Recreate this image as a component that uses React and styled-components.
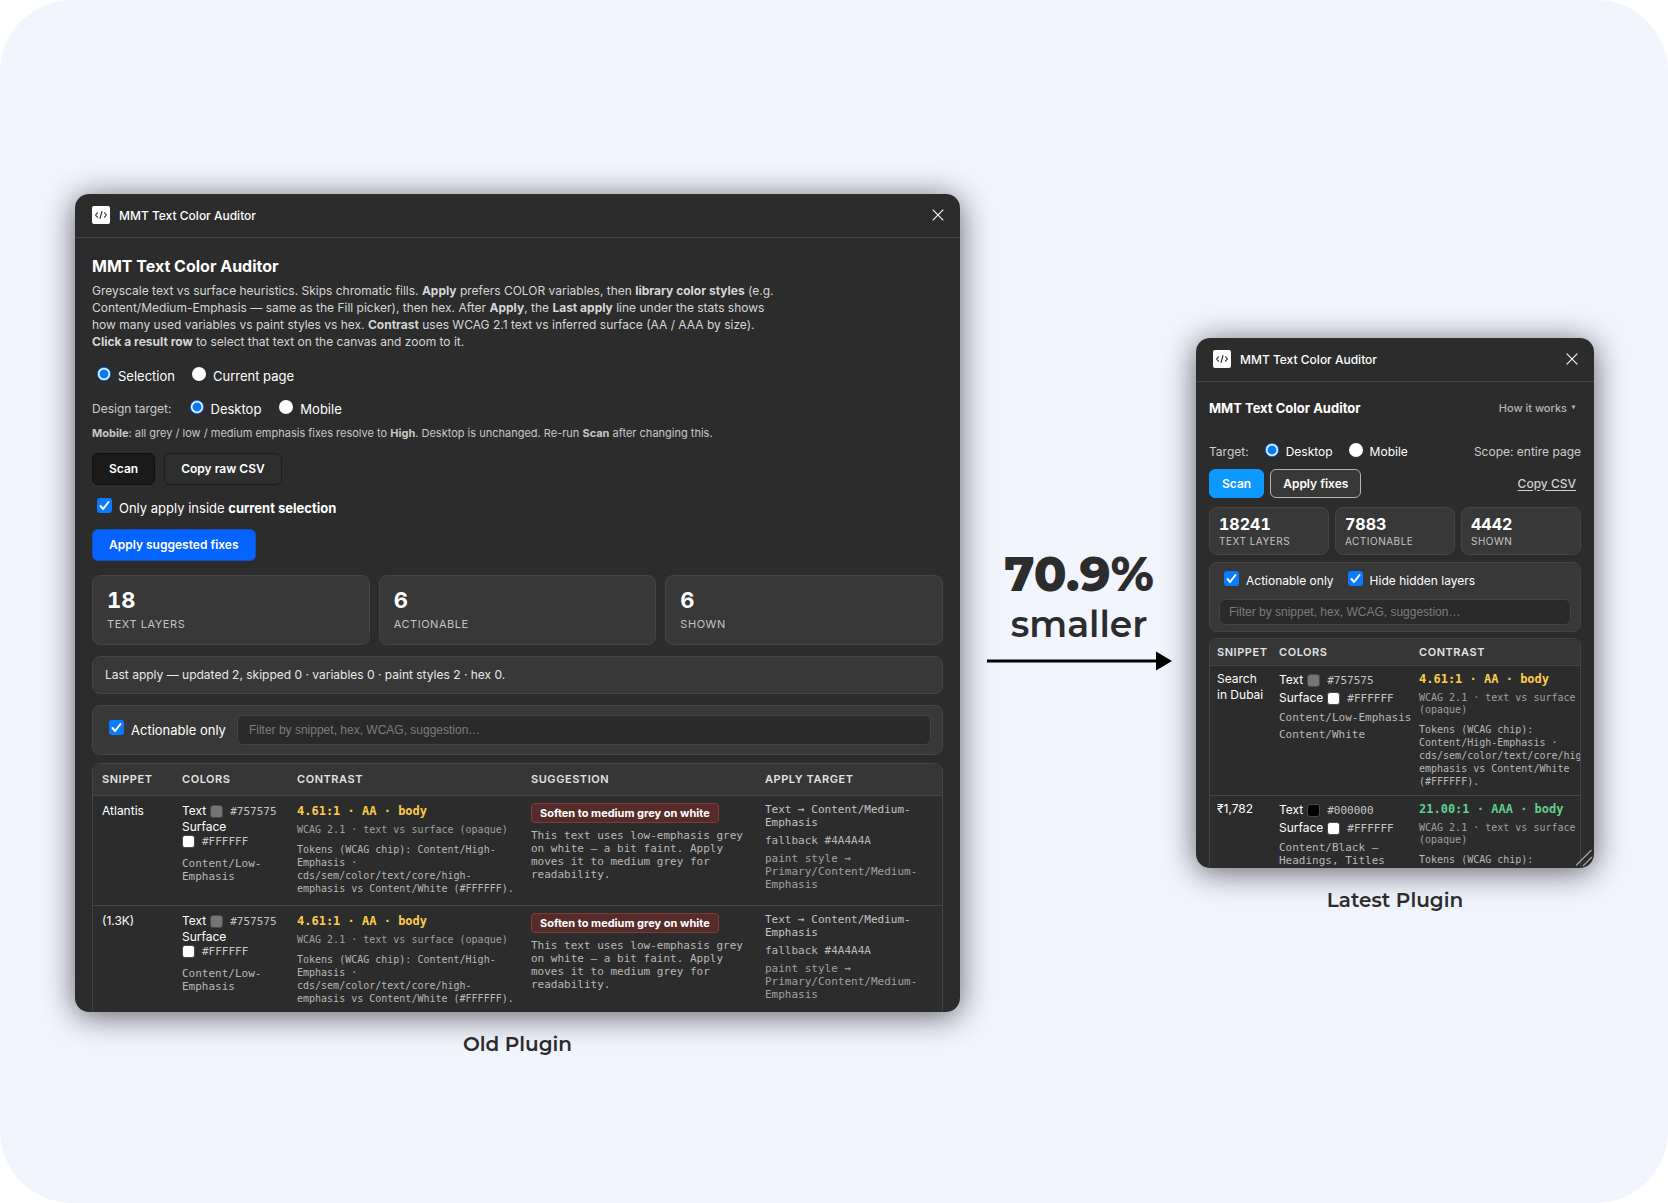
import styled, { createGlobalStyle, css } from "styled-components";
import React, { useState } from "react";

const GlobalStyle = createGlobalStyle`
    * {
        box-sizing: border-box;
    }
    body {
        margin: 0;
        background-color: #ffffff;
        font-family: Inter, "Liberation Sans", sans-serif;
    }
`

//Page
const Stage = styled.main`
    display: grid;
    grid-template-columns: 885fr 236fr 398fr;
    align-items: center;
    min-height: 100vh;
    padding: 0 74px 0 75px;
    border-radius: 72px;
    background-color: #f2f5fe;
`

const Figure = styled.figure`
    margin: 0;
    padding-top: 48px;
    min-width: 0;
`

const Caption = styled.figcaption`
    margin-top: 18px;
    color: #2c2c2c;
    font-family: Montserrat, Inter, sans-serif;
    font-size: 20px;
    font-weight: 600;
    line-height: 28px;
    text-align: center;
`

const Middle = styled.div`
    display: flex;
    flex-direction: column;
    align-items: center;
    padding: 16px 0 0 2px;
    color: #2c2c2c;
    font-family: Montserrat, Inter, sans-serif;
`

const Percent = styled.strong`
    font-size: 48px;
    font-weight: 800;
    line-height: 52px;
`

const Smaller = styled.span`
    margin-bottom: 3px;
    font-size: 36px;
    font-weight: 600;
    line-height: 48px;
`

//Plugin window
const Window = styled.section`
    position: relative;
    max-height: ${props => props.$compact ? "530px" : "818px"};
    overflow: hidden;
    border-radius: 14px;
    background-color: #2c2c2c;
    color: #ffffff;
    font-size: 12px;
`

const Shadow = styled.div`
    border-radius: 14px;
    box-shadow: 0 4px 32px rgba(20, 16, 24, 0.65);
`

const TitleBar = styled.header`
    display: flex;
    align-items: center;
    gap: 9px;
    height: 44px;
    padding: 0 16px 0 17px;
    border-bottom: 1px solid #444444;
    font-weight: 500;
`

const CloseButton = styled.button`
    display: flex;
    margin-left: auto;
    padding: 0;
    border: none;
    background: none;
    color: #ffffff;
`

const Body = styled.div`
    padding: ${props => props.$compact ? "14px 13px 0" : "16px 17px 0"};
`

const Heading = styled.h1`
    margin: 0;
    font-size: ${props => props.$compact ? "13px" : "16px"};
    font-weight: 700;
    line-height: 24px;
`

const Intro = styled.p`
    max-width: 694px;
    margin: 4px 0 0;
    color: #d6d6d6;
    line-height: 17px;
`

const Note = styled.p`
    margin: 5px 0 11px;
    color: #c8c8c8;
    font-size: 11px;
    line-height: 18px;
`

const Row = styled.div`
    display: flex;
    align-items: center;
    gap: ${props => props.$gap || "9px"};
    min-height: ${props => props.$height || "auto"};
    margin-top: ${props => props.$top || "0"};
`

const Hint = styled.span`
    margin-left: ${props => props.$end ? "auto" : "0"};
    color: #cccccc;
`

const Choice = styled.label`
    display: flex;
    align-items: center;
    gap: 7px;
    margin-left: 5px;
    font-size: ${props => props.$compact ? "12px" : "13px"};
    line-height: 20px;
    white-space: nowrap;
`

const Radio = styled.input`
    appearance: none;
    width: 14px;
    height: 14px;
    margin: 0 0 4px;
    border-radius: 50%;
    background-color: #ffffff;
    &:checked {
        border: 1px solid #0a7cff;
        background: radial-gradient(circle, #0a78f5 0 4px, #ffffff 5px);
    }
`

const Check = styled.input`
    appearance: none;
    width: 15px;
    height: 15px;
    margin: 0 0 4px;
    border-radius: 3px;
    background-color: #ffffff;
    &:checked {
        background: #0a7aff url("data:image/svg+xml,%3Csvg xmlns='http://www.w3.org/2000/svg' viewBox='0 0 15 15' fill='none' stroke='white' stroke-width='2' stroke-linecap='round' stroke-linejoin='round'%3E%3Cpath d='M3.5 8l2.6 3L11.5 4'/%3E%3C/svg%3E");
    }
`

const variants = {
    dark: css`
        background-color: #1a1a1a;
        border-color: #101010;
    `,
    plain: css`
        background-color: #2e2e2e;
        border-color: #1e1e1e;
    `,
    blue: css`
        background-color: #0563ff;
        border-color: #0e50c8;
    `,
    sky: css`
        background-color: #0d99ff;
        border-color: #0d99ff;
    `,
    outline: css`
        background-color: #383838;
        border-color: #b4b4b4;
    `,
}

const Button = styled.button`
    height: ${props => props.$compact ? "29px" : "32px"};
    padding: ${props => props.$compact ? "0 12px" : "0 16px"};
    border: 1px solid;
    border-radius: 6px;
    color: #ffffff;
    font-family: inherit;
    font-size: 12px;
    font-weight: 600;
    ${props => variants[props.$variant]}
`

const TextButton = styled.button`
    display: flex;
    align-items: center;
    gap: 4px;
    margin-left: auto;
    padding: 0 5px;
    border: none;
    background: none;
    color: ${props => props.$underline ? "#d0d0d0" : "#b4b4b4"};
    font-family: inherit;
    font-size: ${props => props.$underline ? "12px" : "11px"};
    font-weight: 500;
    text-decoration: ${props => props.$underline ? "underline" : "none"};
    text-underline-offset: 2px;
`

const Panel = styled.div`
    border: 1px solid #444444;
    border-radius: 8px;
    background-color: #383838;
`

const Stats = styled.div`
    display: grid;
    grid-template-columns: repeat(3, 1fr);
    gap: ${props => props.$compact ? "6px" : "9px"};
    margin-top: ${props => props.$compact ? "9px" : "14px"};
`

const StatCard = styled(Panel)`
    padding: ${props => props.$compact ? "6px 9px 5px" : "10px 14px"};
`

const StatNumber = styled.div`
    font-size: ${props => props.$compact ? "16px" : "22px"};
    font-weight: 700;
    font-variant-numeric: tabular-nums;
    line-height: ${props => props.$compact ? "20px" : "28px"};
`

const StatLabel = styled.div`
    color: #c4c4c4;
    font-size: ${props => props.$compact ? "10px" : "11px"};
    line-height: ${props => props.$compact ? "15px" : "20px"};
    letter-spacing: 0.05em;
    text-transform: uppercase;
`

const LastApply = styled(Panel)`
    margin-top: 11px;
    padding: 9px 12px;
    color: #e8e8e8;
    line-height: 18px;
`

const Filters = styled(Panel)`
    display: flex;
    flex-wrap: wrap;
    align-items: center;
    gap: ${props => props.$compact ? "8px 9px" : "11px"};
    margin-top: ${props => props.$compact ? "7px" : "11px"};
    padding: ${props => props.$compact ? "8px 9px 6px" : "9px 11px"};
`

const FilterInput = styled.input`
    flex: 1 1 ${props => props.$compact ? "100%" : "0"};
    min-width: 0;
    height: ${props => props.$compact ? "26px" : "30px"};
    padding: 0 ${props => props.$compact ? "9px" : "11px"};
    border: 1px solid #444444;
    border-radius: 6px;
    background-color: #2a2a2a;
    color: #ffffff;
    font-family: "Liberation Sans", Arial, sans-serif;
    font-size: 12px;
    &::placeholder {
        color: #7c7c7c;
    }
`

//Results
const TableFrame = styled.div`
    overflow: hidden;
    margin-top: ${props => props.$compact ? "6px" : "8px"};
    border: 1px solid #444444;
    border-radius: 8px;
`

const Table = styled.table`
    width: 100%;
    table-layout: fixed;
    border-collapse: collapse;
    text-align: left;
`

const HeadCell = styled.th`
    width: ${props => props.$width || "auto"};
    height: ${props => props.$compact ? "27px" : "32px"};
    padding: ${props => props.$compact ? "0 0 0 7px" : "0 0 0 9px"};
    border-bottom: 1px solid #444444;
    background-color: #363636;
    color: #e2e2e2;
    font-size: 11px;
    font-weight: 600;
    letter-spacing: 0.05em;
    text-transform: uppercase;
`

const Cell = styled.td`
    padding: ${props => props.$compact ? "5px 0 7px 7px" : "7px 4px 10px 9px"};
    border-bottom: 1px solid #444444;
    line-height: 16px;
    vertical-align: top;
`

const SnippetCell = styled(Cell)`
    padding-right: 5px;
`

const ColorLine = styled.div`
    display: flex;
    align-items: center;
    gap: 4px;
    line-height: ${props => props.$compact ? "18px" : "16px"};
`

const Swatch = styled.i`
    width: 13px;
    height: 13px;
    margin-right: 3px;
    border: 1px solid #4a4a4a;
    border-radius: 3px;
    background-color: ${props => props.$color};
`

const Mono = styled.div`
    margin-top: ${props => props.$top || "0"};
    color: ${props => props.$color || "#b8b8b8"};
    font-family: "DejaVu Sans Mono", monospace;
    font-size: ${props => props.$size || "11px"};
    line-height: ${props => props.$line || "13px"};
    white-space: ${props => props.$nowrap ? "nowrap" : "normal"};
`

const Ratio = styled(Mono)`
    color: ${props => props.$pass ? "#5fd08f" : "#ffcd4a"};
    font-size: 12px;
    font-weight: 700;
    line-height: 16px;
`

const Chip = styled.span`
    display: inline-block;
    padding: 0 8px;
    border: 1px solid #7e3a36;
    border-radius: 4px;
    background-color: #562b2a;
    color: #ffffff;
    font-size: 11px;
    font-weight: 700;
    line-height: 18px;
    white-space: nowrap;
`

const Grip = styled.svg`
    position: absolute;
    right: 1px;
    bottom: 1px;
`

const PluginIcon = () => (
    <svg width="18" height="18" viewBox="0 0 18 18" fill="none" strokeLinecap="round" strokeLinejoin="round">
        <rect width="18" height="18" rx="2" fill="#ffffff" />
        <path d="M5.5 6.8L3.5 9l2 2.2M12.5 6.8l2 2.2-2 2.2M10 5.5l-2 7" stroke="#2c2c2c" strokeWidth="1.1" />
    </svg>
)

const PluginWindow = ({ compact, children }) => (
    <Shadow>
        <Window $compact={compact}>
            <TitleBar>
                <PluginIcon />
                MMT Text Color Auditor
                <CloseButton aria-label="Close">
                    <svg width="12" height="12" viewBox="0 0 12 12" stroke="currentColor" strokeWidth="1.1">
                        <path d="M0.7 0.7l10.6 10.6M11.3 0.7L0.7 11.3" />
                    </svg>
                </CloseButton>
            </TitleBar>
            <Body $compact={compact}>{children}</Body>
            {compact &&
                <Grip width="17" height="17" viewBox="0 0 17 17" stroke="#a0a0a0" strokeWidth="1.4">
                    <path d="M0 15.5L15.5 0M7 16L16 7" />
                </Grip>
            }
        </Window>
    </Shadow>
)

const StatRow = ({ compact, values }) => (
    <Stats $compact={compact}>
        {["Text layers", "Actionable", "Shown"].map((label, i) => (
            <StatCard key={label} $compact={compact}>
                <StatNumber $compact={compact}>{values[i]}</StatNumber>
                <StatLabel $compact={compact}>{label}</StatLabel>
            </StatCard>
        ))}
    </Stats>
)

const Toggle = ({ compact, children }) => {
    const [on, setOn] = useState(true);
    return (
        <Choice $compact={compact}>
            <Check type="checkbox" checked={on} onChange={() => setOn(!on)} />
            <span>{children}</span>
        </Choice>
    )
}

const RadioPair = ({ compact, name, options }) => {
    const [value, setValue] = useState(options[0]);
    return options.map(option => (
        <Choice key={option} $compact={compact}>
            <Radio type="radio" name={name} checked={value === option} onChange={() => setValue(option)} />
            {option}
        </Choice>
    ))
}

const placeholder = "Filter by snippet, hex, WCAG, suggestion…";

const OldPlugin = () => (
    <PluginWindow>
        <Heading>MMT Text Color Auditor</Heading>
        <Intro>
            Greyscale text vs surface heuristics. Skips chromatic fills. <b>Apply</b> prefers COLOR variables, then <b>library color styles</b> (e.g. Content/Medium-Emphasis — same as the Fill picker), then hex. After <b>Apply</b>, the <b>Last apply</b> line under the stats shows how many used variables vs paint styles vs hex. <b>Contrast</b> uses WCAG 2.1 text vs inferred surface (AA / AAA by size). <br /><b>Click a result row</b> to select that text on the canvas and zoom to it.
        </Intro>
        <Row $top="16px" $height="20px" $gap="12px">
            <RadioPair name="scope" options={["Selection", "Current page"]} />
        </Row>
        <Row $top="13px" $height="20px" $gap="13px">
            <Hint>Design target:</Hint>
            <RadioPair name="design-target" options={["Desktop", "Mobile"]} />
        </Row>
        <Note><b>Mobile</b>: all grey / low / medium emphasis fixes resolve to <b>High</b>. Desktop is unchanged. Re-run <b>Scan</b> after changing this.</Note>
        <Row>
            <Button $variant="dark">Scan</Button>
            <Button $variant="plain">Copy raw CSV</Button>
        </Row>
        <Row $top="13px" $height="20px">
            <Toggle>Only apply inside <b>current selection</b></Toggle>
        </Row>
        <Row $top="11px">
            <Button $variant="blue">Apply suggested fixes</Button>
        </Row>
        <StatRow values={[18, 6, 6]} />
        <LastApply>Last apply — updated 2, skipped 0 · variables 0 · paint styles 2 · hex 0.</LastApply>
        <Filters>
            <Toggle>Actionable only</Toggle>
            <FilterInput aria-label="Filter results" placeholder={placeholder} />
        </Filters>
        <TableFrame>
            <Table>
                <thead>
                    <tr>
                        <HeadCell $width="80px">Snippet</HeadCell>
                        <HeadCell $width="115px">Colors</HeadCell>
                        <HeadCell $width="234px">Contrast</HeadCell>
                        <HeadCell $width="234px">Suggestion</HeadCell>
                        <HeadCell>Apply target</HeadCell>
                    </tr>
                </thead>
                <tbody>
                    {["Atlantis", "(1.3K)"].map(snippet => (
                        <tr key={snippet}>
                            <Cell>{snippet}</Cell>
                            <Cell>
                                <ColorLine>Text<Swatch $color="#757575" /><Mono $color="#c4c4c4">#757575</Mono></ColorLine>
                                <ColorLine>Surface</ColorLine>
                                <ColorLine><Swatch $color="#ffffff" /><Mono $color="#c4c4c4">#FFFFFF</Mono></ColorLine>
                                <Mono $top="9px">Content/Low-Emphasis</Mono>
                            </Cell>
                            <Cell>
                                <Ratio>4.61:1 · AA · body</Ratio>
                                <Mono $size="10px" $top="4px" $color="#a0a0a0" $nowrap>WCAG 2.1 · text vs surface (opaque)</Mono>
                                <Mono $size="10px" $top="7px">Tokens (WCAG chip): Content/High-Emphasis · cds/sem/color/text/core/high-emphasis vs Content/White (#FFFFFF).</Mono>
                            </Cell>
                            <Cell>
                                <Chip>Soften to medium grey on white</Chip>
                                <Mono $top="6px">This text uses low-emphasis grey on white — a bit faint. Apply moves it to medium grey for readability.</Mono>
                            </Cell>
                            <Cell>
                                <Mono $color="#c4c4c4">Text → Content/Medium-Emphasis</Mono>
                                <Mono $top="5px">fallback #4A4A4A</Mono>
                                <Mono $top="5px" $color="#a0a0a0">paint style → Primary/Content/Medium-Emphasis</Mono>
                            </Cell>
                        </tr>
                    ))}
                </tbody>
            </Table>
        </TableFrame>
    </PluginWindow>
)

const latestRows = [
    { snippet: "Search in Dubai", color: "#757575", tokens: ["Content/Low-Emphasis", "Content/White"], ratio: "4.61:1 · AA · body" },
    { snippet: "₹1,782", color: "#000000", tokens: ["Content/Black – Headings, Titles"], ratio: "21.00:1 · AAA · body", pass: true },
]

const LatestPlugin = () => (
    <PluginWindow compact>
        <Row $height="24px">
            <Heading $compact>MMT Text Color Auditor</Heading>
            <TextButton>
                How it works
                <svg width="5" height="5" viewBox="0 0 5 5" fill="currentColor" aria-hidden="true">
                    <path d="M0.5 0.5h4l-2 4z" />
                </svg>
            </TextButton>
        </Row>
        <Row $top="22px" $height="20px" $gap="11px">
            <Hint>Target:</Hint>
            <RadioPair compact name="target" options={["Desktop", "Mobile"]} />
            <Hint $end>Scope: entire page</Hint>
        </Row>
        <Row $top="7px" $gap="6px">
            <Button $compact $variant="sky">Scan</Button>
            <Button $compact $variant="outline">Apply fixes</Button>
            <TextButton $underline>Copy CSV</TextButton>
        </Row>
        <StatRow compact values={[18241, 7883, 4442]} />
        <Filters $compact>
            <Toggle compact>Actionable only</Toggle>
            <Toggle compact>Hide hidden layers</Toggle>
            <FilterInput $compact aria-label="Filter results" placeholder={placeholder} />
        </Filters>
        <TableFrame $compact>
            <Table>
                <thead>
                    <tr>
                        <HeadCell $compact $width="62px">Snippet</HeadCell>
                        <HeadCell $compact $width="140px">Colors</HeadCell>
                        <HeadCell $compact>Contrast</HeadCell>
                    </tr>
                </thead>
                <tbody>
                    {latestRows.map(row => (
                        <tr key={row.snippet}>
                            <SnippetCell $compact>{row.snippet}</SnippetCell>
                            <Cell $compact>
                                <ColorLine $compact>Text<Swatch $color={row.color} /><Mono $color="#c4c4c4">{row.color}</Mono></ColorLine>
                                <ColorLine $compact>Surface<Swatch $color="#ffffff" /><Mono $color="#c4c4c4">#FFFFFF</Mono></ColorLine>
                                {row.tokens.map(token => <Mono key={token} $top="4px">{token}</Mono>)}
                            </Cell>
                            <Cell $compact>
                                <Ratio $pass={row.pass}>{row.ratio}</Ratio>
                                <Mono $size="10px" $line="12px" $top="5px" $color="#a0a0a0">WCAG 2.1 · text vs surface (opaque)</Mono>
                                <Mono $size="10px" $top="7px">Tokens (WCAG chip): Content/High-Emphasis · cds/sem/color/text/core/high-emphasis vs Content/White (#FFFFFF).</Mono>
                            </Cell>
                        </tr>
                    ))}
                </tbody>
            </Table>
        </TableFrame>
    </PluginWindow>
)

const App = () => (
    <>
        <GlobalStyle />
        <Stage>
            <Figure>
                <OldPlugin />
                <Caption>Old Plugin</Caption>
            </Figure>
            <Middle>
                <Percent>70.9%</Percent>
                <Smaller>smaller</Smaller>
                <svg width="185" height="20" viewBox="0 0 185 20">
                    <path d="M0 8.5h169V0.5l16 9.5-16 9.5v-8H0z" fill="#000000" />
                </svg>
            </Middle>
            <Figure>
                <LatestPlugin />
                <Caption>Latest Plugin</Caption>
            </Figure>
        </Stage>
    </>
)

export default App;
